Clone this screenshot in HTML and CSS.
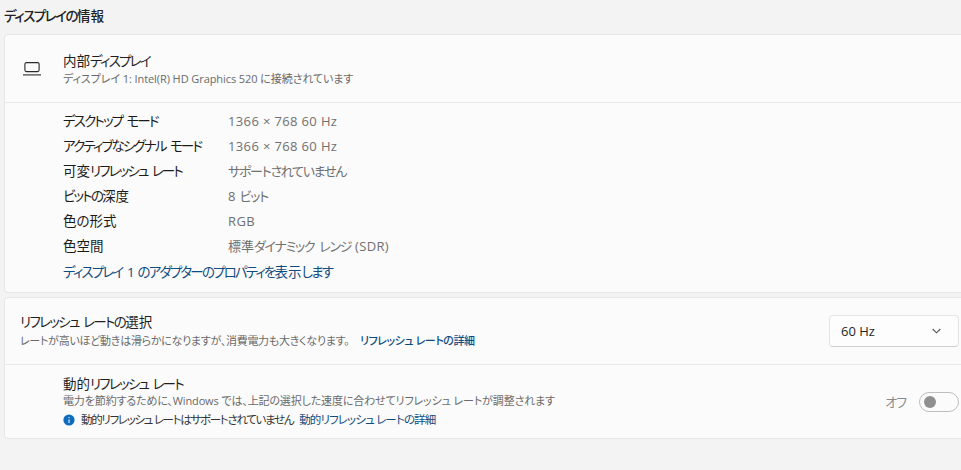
FILE: index.html
```
<!DOCTYPE html>
<html lang="ja">
<head>
<meta charset="utf-8">
<title>ディスプレイの情報</title>
<link rel="stylesheet" href="styles.css">
</head>
<body>
<h1 class="title">ディスプレイの<span class="k">情報</span></h1>
<section class="card info">
  <div class="head">
    <svg class="laptop" width="18" height="14" viewBox="0 0 18 14" fill="none" stroke="#2a2a2a" stroke-width="1.1"><rect x="1.9" y="0.6" width="14.2" height="9" rx="1.5"/><path d="M0 12.9H18"/></svg>
    <div>
      <div class="name"><span class="k">内部</span>ディスプレイ</div>
      <div class="sub sub-display">ディスプレイ 1: Intel(R) HD Graphics 520 に接続されています</div>
    </div>
  </div>
  <div class="body">
    <dl class="specs">
      <dt>デスクトップ モード</dt><dd>1366 × 768 60 Hz</dd>
      <dt>アクティブなシグナル モード</dt><dd>1366 × 768 60 Hz</dd>
      <dt><span class="k">可変</span>リフレッシュ レート</dt><dd class="jp">サポートされていません</dd>
      <dt>ビットの<span class="k">深度</span></dt><dd>8 <span class="jp">ビット</span></dd>
      <dt><span class="k">色の形式</span></dt><dd>RGB</dd>
      <dt><span class="k">色空間</span></dt><dd><span class="jp"><span class="k">標準</span>ダイナミック レンジ</span> (SDR)</dd>
    </dl>
    <a class="link adapter" href="#">ディスプレイ 1 のアダプターのプロパティを<span class="k">表示</span>します</a>
  </div>
</section>
<section class="card rate">
  <div class="rate-top">
    <div>
      <div class="name name-rate">リフレッシュ レートの<span class="k">選択</span></div>
      <div class="sub sub-rate">レートが高いほど動きは滑らかになりますが、消費電力も大きくなります。 <a class="link strong" href="#">リフレッシュ レートの詳細</a></div>
    </div>
    <div class="select"><span>60 Hz</span><svg width="9" height="6" viewBox="0 0 9 6" fill="none" stroke="#555" stroke-width="1.1"><path d="M.7 1l3.8 3.8L8.3 1"/></svg></div>
  </div>
  <div class="dynamic">
    <div>
      <div class="name"><span class="k">動的</span>リフレッシュ レート</div>
      <div class="sub sub-dynamic">電力を節約するために、Windows では、上記の選択した速度に合わせてリフレッシュ レートが調整されます</div>
      <div class="notice">
        <svg width="12" height="12" viewBox="0 0 12 12"><circle cx="6" cy="6" r="5.6" fill="#0f6cbd"/><path d="M6 5.4V9" stroke="#fff" stroke-width="1"/><circle cx="6" cy="3.6" r=".7" fill="#fff"/></svg>
        <span>動的リフレッシュ レートはサポートされていません</span>
        <a class="link" href="#">動的リフレッシュ レートの詳細</a>
      </div>
    </div>
    <div class="toggle-wrap"><span class="off">オフ</span><span class="toggle"><i></i></span></div>
  </div>
</section>
</body>
</html>
```
FILE: styles.css
```
* { box-sizing: border-box; }
html, body { margin: 0; height: 100%; overflow: hidden; }
body {
  background: #f3f3f3;
  color: #1b1b1b;
  font-family: "Open Sans", "Noto Sans CJK JP", sans-serif;
  font-feature-settings: "palt";
  font-size: 13px;
  padding: 0 0 0 4px;
}
.k { letter-spacing: 0; }
.title {
  margin: 0;
  padding-top: 7px;
  height: 34px;
  font-size: 13.5px;
  line-height: 19px;
  font-weight: 500;
  letter-spacing: -1.5px;
  color: #222;
}
.card {
  background: #fbfbfb;
  border: 1px solid #e7e7e7;
  border-right: 0;
  border-radius: 4px 0 0 4px;
}
.info { height: 259px; }
.head {
  height: 68px;
  display: flex;
  align-items: center;
  padding-left: 18px;
  gap: 22px;
  border-bottom: 1px solid #e8e8e8;
}
.laptop { flex: none; margin-top: 1px; }
.name {
  font-size: 13.5px;
  line-height: 18px;
  letter-spacing: -1.75px;
  word-spacing: 2.5px;
  color: #1f1f1f;
}
.name-rate { margin-top: -2px; padding-bottom: 2px; letter-spacing: -1.65px; }
.sub {
  font-size: 11px;
  line-height: 15px;
  color: #6a6a6a;
  white-space: nowrap;
}
.sub-display { letter-spacing: -0.08px; padding-top: 1px; }
.sub-rate { letter-spacing: -0.28px; }
.sub-dynamic { letter-spacing: -0.13px; }
.body { padding: 5px 0 0 58px; }
.specs {
  margin: 0;
  display: grid;
  grid-template-columns: 165px 1fr;
  grid-auto-rows: 25px;
  align-items: center;
  font-size: 13.5px;
}
.specs dt { padding-bottom: 2px; letter-spacing: -1.85px; word-spacing: 2.5px; color: #1b1b1b; }
.specs dd { margin: 0; color: #707070; font-size: 13px; letter-spacing: 0.36px; white-space: nowrap; }
.specs .jp { letter-spacing: -1.3px; word-spacing: 3px; }
.link { color: #0f4c81; text-decoration: none; }
.adapter { display: block; margin-top: 2px; font-size: 13.5px; line-height: 25px; letter-spacing: -1.85px; word-spacing: 3px; }
.rate { margin-top: 4px; height: 142px; }
.rate-top {
  height: 67px;
  display: flex;
  align-items: center;
  justify-content: space-between;
  padding-left: 15px;
  border-bottom: 1px solid #e8e8e8;
}
.strong { font-weight: 500; letter-spacing: -0.45px; margin-left: 8px; }
.select {
  width: 130px;
  height: 32px;
  margin-right: 2px;
  display: flex;
  align-items: center;
  justify-content: space-between;
  padding: 0 17px 0 11px;
  background: #fdfdfd;
  border: 1px solid #e4e4e4;
  border-bottom-color: #cfcfcf;
  border-radius: 4px;
  font-size: 13px;
  color: #1f1f1f;
}
.dynamic {
  height: 73px;
  display: flex;
  justify-content: space-between;
  align-items: center;
  padding: 0 0 0 58px;
}
.notice {
  display: flex;
  align-items: center;
  gap: 6px;
  margin-top: 3px;
  font-size: 11.5px;
  line-height: 17px;
  letter-spacing: -1.3px;
  white-space: nowrap;
  color: #333;
}
.notice .link { letter-spacing: -0.85px; }
.toggle-wrap {
  display: flex;
  align-items: center;
  gap: 13px;
  margin-right: 2px;
  font-size: 13px;
  color: #8a8a8a;
}
.off { letter-spacing: -1px; }
.toggle {
  width: 40px;
  height: 20px;
  border: 1px solid #bdbdbd;
  border-radius: 10px;
  display: flex;
  align-items: center;
  padding-left: 4px;
}
.toggle i { width: 12px; height: 12px; border-radius: 50%; background: #8f8f8f; }
```
